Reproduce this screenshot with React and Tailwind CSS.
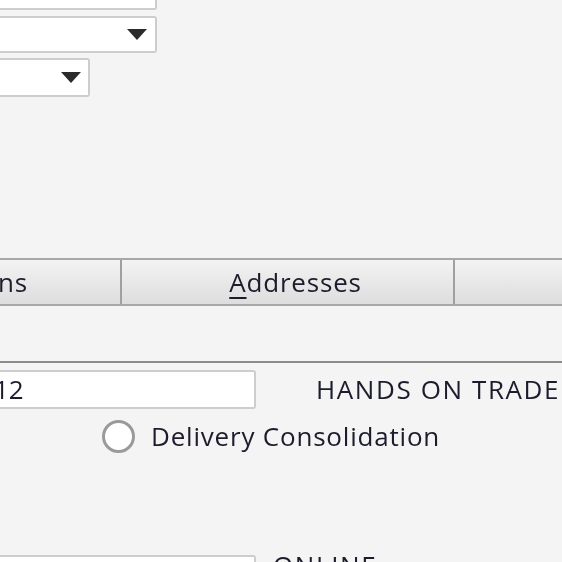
import React from "react";

function Arrow() {
  return (
    <svg width="20" height="11" viewBox="0 0 20 11" className="shrink-0">
      <path d="M0 0 H20 L10 11 Z" fill="#2b2b2b" />
    </svg>
  );
}

export default function App() {
  return (
    <div
      className="w-[562px] h-[562px] overflow-hidden bg-[#f4f4f4] flex flex-col text-[#1c1c2c] blur-[0.4px]"
      style={{ fontFamily: '"Open Sans", "Noto Sans", sans-serif' }}
    >
      {/* top text box (cut off) */}
      <div className="shrink-0 w-[157px] h-[10px] bg-white border-b-2 border-r-2 border-[#cdcdcd] rounded-br-[3px]" />
      {/* dropdown 1 */}
      <div className="shrink-0 mt-[6px] w-[157px] h-[37px] bg-white border-2 border-l-0 border-[#cdcdcd] rounded-r-[3px] flex items-center justify-end pr-[8px]">
        <Arrow />
      </div>
      {/* dropdown 2 */}
      <div className="shrink-0 mt-[5px] w-[90px] h-[39px] bg-white border-2 border-l-0 border-[#cdcdcd] rounded-r-[3px] flex items-center justify-end pr-[7px]">
        <Arrow />
      </div>

      {/* tabs */}
      <div className="shrink-0 mt-[161px] h-[48px] flex border-t-2 border-b-2 border-[#a8a8a8] bg-gradient-to-b from-[#f3f3f3] to-[#dddddd] text-[26px] font-medium leading-none">
        <div className="w-[122px] shrink-0 flex items-center border-r-2 border-[#a0a0a0]">
          <span className="-ml-[2px] tracking-[0.8px]">ns</span>
        </div>
        <div className="w-[333px] shrink-0 flex items-center justify-center border-r-2 border-[#a0a0a0]">
          <span className="ml-[16px] tracking-[0.8px]">
            <span className="underline decoration-2 underline-offset-[5px]">A</span>ddresses
          </span>
        </div>
        <div className="flex-1" />
      </div>

      {/* separator */}
      <div className="shrink-0 mt-[55px] h-[2px] bg-[#8c8c8c]" />

      {/* input row */}
      <div className="shrink-0 mt-[7px] flex items-center">
        <div className="w-[256px] h-[39px] bg-white border-2 border-l-0 border-[#cdcdcd] rounded-r-[3px] flex items-center text-[26px] font-medium">
          <span className="-ml-[6px]">12</span>
        </div>
        <span className="ml-[60px] text-[26px] font-medium whitespace-nowrap tracking-[1.6px]">HANDS ON TRADE</span>
      </div>

      {/* radio row */}
      <div className="shrink-0 mt-[8px] flex items-center">
        <div className="ml-[102px] w-[33px] h-[33px] rounded-full border-[3px] border-[#9a9a9a] bg-white" />
        <span className="ml-[16px] text-[26px] font-medium tracking-[0.8px] whitespace-nowrap">Delivery Consolidation</span>
      </div>

      {/* bottom row */}
      <div className="shrink-0 mt-[99px] flex items-start">
        <div className="w-[256px] h-[39px] bg-white border-2 border-l-0 border-[#cdcdcd] rounded-r-[3px]" />
        <span className="ml-[17px] -mt-[3px] text-[26px] font-medium tracking-[1.6px] leading-none whitespace-nowrap">ONLINE</span>
      </div>
    </div>
  );
}
